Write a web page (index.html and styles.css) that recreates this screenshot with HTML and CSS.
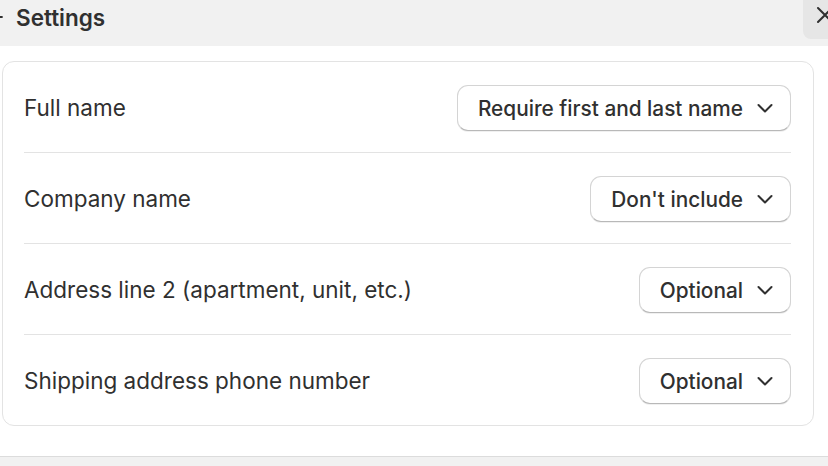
FILE: index.html
```html
<!DOCTYPE html>
<html lang="en">
<head>
<meta charset="utf-8">
<title>Settings</title>
<link rel="stylesheet" href="styles.css">
</head>
<body>
<div class="page">
  <header class="header">
    <div class="title-group">
      <svg class="back" width="16" height="16" viewBox="0 0 16 16" aria-hidden="true"><path d="M15 8H2M7 3L2 8l5 5" fill="none" stroke="#303030" stroke-width="1.8" stroke-linecap="round" stroke-linejoin="round"/></svg>
      <h1 class="title">Settings</h1>
    </div>
    <button class="close" aria-label="Close">
      <svg width="22" height="22" viewBox="0 0 22 22" aria-hidden="true"><path d="M5 5l14 14M19 5L5 19" fill="none" stroke="#303030" stroke-width="2" stroke-linecap="round"/></svg>
    </button>
  </header>
  <main class="content">
    <section class="card">
      <div class="row">
        <span class="label">Full name</span>
        <button class="select">Require first and last name<svg class="chev" width="16" height="16" viewBox="0 0 16 16"><path d="M1.5 5l6.5 6.5L14.5 5" fill="none" stroke="#303030" stroke-width="2" stroke-linecap="round" stroke-linejoin="round"/></svg></button>
      </div>
      <div class="row">
        <span class="label">Company name</span>
        <button class="select">Don't include<svg class="chev" width="16" height="16" viewBox="0 0 16 16"><path d="M1.5 5l6.5 6.5L14.5 5" fill="none" stroke="#303030" stroke-width="2" stroke-linecap="round" stroke-linejoin="round"/></svg></button>
      </div>
      <div class="row">
        <span class="label">Address line 2 (apartment, unit, etc.)</span>
        <button class="select">Optional<svg class="chev" width="16" height="16" viewBox="0 0 16 16"><path d="M1.5 5l6.5 6.5L14.5 5" fill="none" stroke="#303030" stroke-width="2" stroke-linecap="round" stroke-linejoin="round"/></svg></button>
      </div>
      <div class="row">
        <span class="label">Shipping address phone number</span>
        <button class="select">Optional<svg class="chev" width="16" height="16" viewBox="0 0 16 16"><path d="M1.5 5l6.5 6.5L14.5 5" fill="none" stroke="#303030" stroke-width="2" stroke-linecap="round" stroke-linejoin="round"/></svg></button>
      </div>
    </section>
  </main>
  <footer class="footer"></footer>
</div>
</body>
</html>
```
FILE: styles.css
```css
* { box-sizing: border-box; }
html, body {
  margin: 0;
  padding: 0;
  height: 100%;
  overflow: hidden;
  background: #ffffff;
}
body {
  font-family: Inter, "Noto Sans", sans-serif;
  color: #303030;
}
.page {
  display: flex;
  flex-direction: column;
  height: 466px;
}
.header {
  height: 46px;
  background: #f1f1f1;
  display: flex;
  justify-content: space-between;
  align-items: flex-start;
  flex: none;
}
.title-group {
  display: flex;
  align-items: center;
  gap: 13px;
  margin-left: -13px;
  height: 34px;
}
.back { flex: none; }
.title {
  margin: 0;
  font-size: 22.5px;
  font-weight: 600;
  color: #303030;
}
.close {
  width: 46px;
  height: 39px;
  margin-right: -21px;
  border: none;
  border-radius: 0 0 0 8px;
  background: #e6e6e6;
  padding: 3px 0 0 10px;
  display: flex;
  align-items: flex-start;
}
.content {
  flex: 1;
  padding: 15px 14px 0 2px;
}
.card {
  border: 1px solid #e3e3e3;
  border-radius: 12px;
  padding: 0 22px 0 21px;
  background: #fff;
}
.row {
  height: 91px;
  display: flex;
  align-items: center;
  justify-content: space-between;
  border-top: 1px solid #e3e3e3;
}
.row:first-child {
  border-top: none;
  height: 90px;
}
.label {
  font-size: 22.5px;
  font-weight: 400;
  color: #303030;
}
.select {
  height: 46px;
  margin-top: 2px;
  display: flex;
  align-items: center;
  gap: 14px;
  padding: 0 17px 0 20px;
  border: 1px solid #d4d4d4;
  border-bottom-color: #b8b8b8;
  border-radius: 11px;
  background: #fff;
  font-family: inherit;
  font-size: 20.8px;
  font-weight: 450;
  color: #303030;
  box-shadow: 0 1px 0 rgba(0,0,0,0.06);
}
.chev { flex: none; }
.footer {
  flex: none;
  height: 10px;
  background: #f1f1f1;
  border-top: 1px solid #dcdcdc;
}
```
